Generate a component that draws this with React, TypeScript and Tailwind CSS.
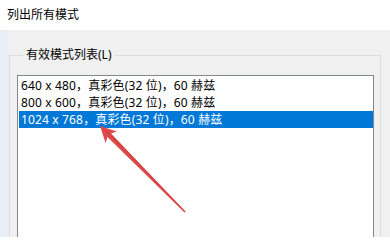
const modes = [
  "640 x 480，真彩色(32 位)，60 赫兹",
  "800 x 600，真彩色(32 位)，60 赫兹",
  "1024 x 768，真彩色(32 位)，60 赫兹",
];

const App = () => {
  const selected = 2;
  return (
    <div
      className="relative w-[390px] h-[237px] overflow-hidden bg-[#f0f0f0] text-[12px] text-black"
      style={{ fontFamily: '"Noto Sans", "Noto Sans CJK SC", sans-serif' }}
    >
      <div className="h-[30px] bg-white flex items-center pl-[7px]">列出所有模式</div>
      <div className="flex">
        <div className="w-[9px] h-[207px] bg-[#e8eff7]" />
        <fieldset className="mt-[17px] w-[372px] h-[220px] border border-[#dcdcdc] pl-[7px] pr-[6px]">
          <legend className="ml-[6px] px-[3px] leading-[16px]">有效模式列表(L)</legend>
          <div className="mt-[12px] h-[200px] border border-[#828790] bg-white p-[1px] pr-0">
            {modes.map((m, i) => (
              <div
                key={m}
                className={
                  "h-[17px] leading-[17px] pl-[2px] whitespace-nowrap tracking-[0.15px] " +
                  (i === selected ? "bg-[#0078d7] text-white" : "")
                }
              >
                {m}
              </div>
            ))}
          </div>
        </fieldset>
      </div>
      <svg className="absolute inset-0 pointer-events-none" width="390" height="237" viewBox="0 0 390 237">
        <polygon
          points="100,126 116.9,131.6 110.9,133.4 185.5,211.5 184.5,212.5 107.4,137 105.6,143"
          fill="#e04a4a"
        />
        <polygon points="100,126 110.9,133.4 185.5,211.5 185,212" fill="#c83c3c" opacity="0.5" />
      </svg>
    </div>
  );
};

export default App;
